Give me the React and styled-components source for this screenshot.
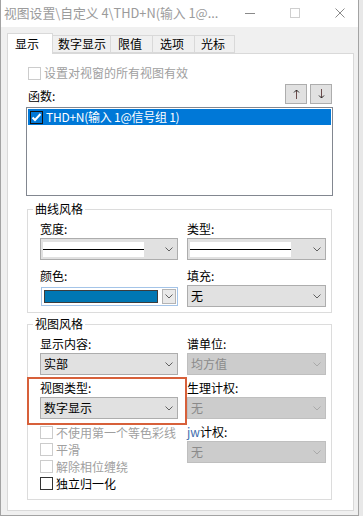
import React from 'react';
import styled, { createGlobalStyle, css } from 'styled-components';

const FONT = `"Noto Sans CJK SC", "Microsoft YaHei", sans-serif`;

const GlobalStyle = createGlobalStyle`
  html, body { margin: 0; padding: 0; }
  body { font-family: ${FONT}; font-size: 12px; background: #e6e6e6; color: #000; }
  * { box-sizing: border-box; }
`;

const Screen = styled.div`
  width: 363px;
  height: 516px;
  overflow: hidden;
  background: #e8e8e8;
`;

const Window = styled.div`
  width: 359px;
  height: 516px;
  background: #f0f0f0;
  border: 1px solid #a3a3a3;
  border-top: none;
  display: flex;
  flex-direction: column;
`;

const TitleBar = styled.div`
  height: 27px;
  flex: none;
  background: #fff;
  display: flex;
  align-items: center;
  padding: 0 13px 1px 3px;
`;

const TitleText = styled.div`
  flex: 1;
  color: #9b9b9b;
  font-size: 12.8px;
  line-height: 16px;
  white-space: nowrap;
`;

const WinButtons = styled.div`
  display: flex;
  align-items: center;
  gap: 35px;
`;

const Body = styled.div`
  flex: 1;
  display: flex;
  flex-direction: column;
  padding: 6px 4px 4px 6px;
  min-height: 0;
`;

const TabRow = styled.div`
  position: relative;
  z-index: 1;
  height: 20px;
  display: flex;
  align-items: flex-start;
`;

const Tab = styled.div`
  width: ${(p) => p.$w}px;
  height: ${(p) => (p.$active ? 21 : 18)}px;
  margin-top: ${(p) => (p.$active ? 0 : 2)}px;
  margin-left: ${(p) => (p.$first ? 0 : -1)}px;
  padding-left: ${(p) => p.$pl}px;
  border: 1px solid #d9d9d9;
  border-bottom: ${(p) => (p.$active ? 'none' : '1px solid #d9d9d9')};
  background: ${(p) => (p.$active ? '#fff' : '#f0f0f0')};
  line-height: 16px;
  display: flex;
  align-items: center;
  white-space: nowrap;
  position: relative;
  z-index: ${(p) => (p.$active ? 2 : 1)};
`;

const Panel = styled.div`
  flex: 1;
  background: #fff;
  border: 1px solid #d9d9d9;
  padding: 11px 20px 10px 18px;
  display: flex;
  flex-direction: column;
  min-height: 0;
`;

const CheckRow = styled.label`
  display: flex;
  align-items: center;
  gap: 3px;
  height: ${(p) => p.$h || 16}px;
  line-height: 16px;
  margin-left: ${(p) => p.$ml || 0}px;
  color: ${(p) => (p.$disabled ? '#a0a0a0' : '#000')};
  white-space: nowrap;
`;

const Box = styled.span`
  width: 13px;
  height: 13px;
  flex: none;
  border: 1px solid ${(p) => (p.$disabled ? '#cccccc' : '#333333')};
  background: #fff;
`;

const FuncHeader = styled.div`
  margin-top: 3px;
  height: 20px;
  display: flex;
  justify-content: space-between;
  align-items: flex-end;
  padding: 0 1px 0 2px;
`;

const FuncLabel = styled.span`
  line-height: 16px;
`;

const ArrowGroup = styled.div`
  display: flex;
  gap: 3px;
  align-self: stretch;
`;

const ArrowButton = styled.div`
  width: 22px;
  height: 20px;
  background: #e1e1e1;
  border: 1px solid #adadad;
  display: flex;
  align-items: center;
  justify-content: center;
`;

const ListBox = styled.div`
  margin-top: 3px;
  height: 89px;
  border: 1px solid #828790;
  padding: 1px;
  background: #fff;
`;

const ListItem = styled.div`
  height: 16px;
  background: #0078d7;
  color: #fff;
  display: flex;
  align-items: center;
  gap: 3px;
  padding-left: 2px;
  line-height: 16px;
  white-space: nowrap;
`;

const ItemText = styled.span`
  letter-spacing: -0.25px;
`;

const Group = styled.fieldset`
  margin: ${(p) => p.$mt}px 1px 0 1px;
  border: 1px solid #dcdcdc;
  padding: 4px 6px ${(p) => p.$pb}px 5px;
  min-width: 0;
`;

const Legend = styled.legend`
  padding: 0 2px;
  line-height: 16px;
  font-size: 12px;
`;

const FieldGrid = styled.div`
  margin-left: 7px;
  display: grid;
  grid-template-columns: 138px 139px;
  column-gap: 9px;
  row-gap: ${(p) => p.$rg}px;
  align-items: start;
`;

const Field = styled.div`
  display: flex;
  flex-direction: column;
  gap: 1px;
  position: relative;
  ${(p) =>
    p.$highlight &&
    css`
      &::after {
        content: '';
        position: absolute;
        left: -13px;
        right: -9px;
        top: -3px;
        bottom: -6px;
        border: 2px solid #d7603a;
        pointer-events: none;
      }
    `}
`;

const FieldLabel = styled.div`
  line-height: 16px;
  height: 16px;
  white-space: nowrap;
  color: ${(p) => (p.$disabled ? '#a0a0a0' : '#000')};
`;

const Blue = styled.span`
  color: #3f6fae;
`;

const Combo = styled.div`
  height: 22px;
  border: 1px solid ${(p) => (p.$disabled ? '#bfbfbf' : '#adadad')};
  background: ${(p) => (p.$disabled ? '#cccccc' : '#e1e1e1')};
  display: flex;
  align-items: center;
  justify-content: space-between;
  padding: ${(p) => (p.$sample ? '3px 4px 3px 2px' : '0 4px 0 3px')};
  color: ${(p) => (p.$disabled ? '#8a8a8a' : '#000')};
  line-height: 16px;
`;

const LineSample = styled.div`
  width: 101px;
  height: 15px;
  align-self: flex-start;
  background: #fff;
  display: flex;
  align-items: center;
  &::before {
    content: '';
    display: block;
    width: 100%;
    height: 1px;
    background: #000;
  }
`;

const ColorCombo = styled.div`
  height: 19px;
  margin-top: 2px;
  margin-left: 1px;
  border: 1px solid #a4c4e8;
  background: #fff;
  display: flex;
  align-items: stretch;
  gap: 4px;
  padding: 1px;
`;

const Swatch = styled.div`
  flex: 1;
  border: 1px solid #3c3c3c;
  background: #0077b3;
  margin: 1px 0 1px 1px;
`;

const DropBtn = styled.div`
  width: 14px;
  border: 1px solid #b4b4b4;
  background: #e9e9e9;
  display: flex;
  align-items: center;
  justify-content: center;
`;

const CheckList = styled.div`
  display: flex;
  flex-direction: column;
`;

const Chevron = ({ disabled }) => (
  <svg width="8" height="5" viewBox="0 0 8 5">
    <path d="M0.5 0.5 L4 4 L7.5 0.5" fill="none" stroke={disabled ? '#a9a9a9' : '#606060'} strokeWidth="1" />
  </svg>
);

const Check = ({ disabled, label, h }) => (
  <CheckRow $disabled={disabled} $h={h}>
    <Box $disabled={disabled} />
    {label}
  </CheckRow>
);

const tabs = [
  { t: '显示', w: 46, pl: 7, active: true },
  { t: '数字显示', w: 59, pl: 5 },
  { t: '限值', w: 43, pl: 7 },
  { t: '选项', w: 43, pl: 7 },
  { t: '光标', w: 41, pl: 6 },
];

export default function App() {
  return (
    <Screen>
      <GlobalStyle />
      <Window>
        <TitleBar>
          <TitleText>视图设置\自定义 4\THD+N(输入 1@...</TitleText>
          <WinButtons>
            <svg width="10" height="10" viewBox="0 0 10 10">
              <path d="M0 5.5 H10" stroke="#8a8a8a" strokeWidth="1" />
            </svg>
            <svg width="10" height="10" viewBox="0 0 10 10">
              <rect x="0.5" y="0.5" width="9" height="9" fill="none" stroke="#cfcfcf" strokeWidth="1" />
            </svg>
            <svg width="10" height="10" viewBox="0 0 10 10">
              <path d="M0.5 0.5 L9.5 9.5 M9.5 0.5 L0.5 9.5" stroke="#8a8a8a" strokeWidth="1" />
            </svg>
          </WinButtons>
        </TitleBar>
        <Body>
          <TabRow>
            {tabs.map((t, i) => (
              <Tab key={t.t} $w={t.w} $pl={t.pl} $active={t.active} $first={i === 0}>
                {t.t}
              </Tab>
            ))}
          </TabRow>
          <Panel>
            <CheckRow $disabled $ml={2}>
              <Box $disabled />
              设置对视窗的所有视图有效
            </CheckRow>
            <FuncHeader>
              <FuncLabel>函数:</FuncLabel>
              <ArrowGroup>
                <ArrowButton>
                  <svg width="7" height="10" viewBox="0 0 7 10">
                    <path d="M3.5 1 V10" stroke="#6b4a4a" strokeWidth="1" />
                    <path d="M1 3.5 L3.5 1 L6 3.5" fill="none" stroke="#222" strokeWidth="1" />
                  </svg>
                </ArrowButton>
                <ArrowButton>
                  <svg width="7" height="10" viewBox="0 0 7 10">
                    <path d="M3.5 0 V9" stroke="#6b4a4a" strokeWidth="1" />
                    <path d="M1 6.5 L3.5 9 L6 6.5" fill="none" stroke="#222" strokeWidth="1" />
                  </svg>
                </ArrowButton>
              </ArrowGroup>
            </FuncHeader>
            <ListBox>
              <ListItem>
                <svg width="13" height="13" viewBox="0 0 13 13">
                  <rect x="0.5" y="0.5" width="12" height="12" fill="none" stroke="#111" strokeWidth="1" />
                  <path d="M2.5 6.5 L5 9 L10.5 3" fill="none" stroke="#fff" strokeWidth="2" />
                </svg>
                <ItemText>THD+N(输入 1@信号组 1)</ItemText>
              </ListItem>
            </ListBox>

            <Group $mt={5} $pb={5}>
              <Legend>曲线风格</Legend>
              <FieldGrid $rg={8}>
                <Field>
                  <FieldLabel>宽度:</FieldLabel>
                  <Combo $sample>
                    <LineSample />
                    <Chevron />
                  </Combo>
                </Field>
                <Field>
                  <FieldLabel>类型:</FieldLabel>
                  <Combo $sample>
                    <LineSample />
                    <Chevron />
                  </Combo>
                </Field>
                <Field>
                  <FieldLabel>颜色:</FieldLabel>
                  <ColorCombo>
                    <Swatch />
                    <DropBtn>
                      <Chevron />
                    </DropBtn>
                  </ColorCombo>
                </Field>
                <Field>
                  <FieldLabel>填充:</FieldLabel>
                  <Combo>
                    <span>无</span>
                    <Chevron />
                  </Combo>
                </Field>
              </FieldGrid>
            </Group>

            <Group $mt={3} $pb={7}>
              <Legend>视图风格</Legend>
              <FieldGrid $rg={5}>
                <Field>
                  <FieldLabel>显示内容:</FieldLabel>
                  <Combo>
                    <span>实部</span>
                    <Chevron />
                  </Combo>
                </Field>
                <Field>
                  <FieldLabel>谱单位:</FieldLabel>
                  <Combo $disabled>
                    <span>均方值</span>
                    <Chevron disabled />
                  </Combo>
                </Field>
                <Field $highlight>
                  <FieldLabel>视图类型:</FieldLabel>
                  <Combo>
                    <span>数字显示</span>
                    <Chevron />
                  </Combo>
                </Field>
                <Field>
                  <FieldLabel>生理计权:</FieldLabel>
                  <Combo $disabled>
                    <span>无</span>
                    <Chevron disabled />
                  </Combo>
                </Field>
                <CheckList>
                  <Check disabled label="不使用第一个等色彩线" h={17} />
                  <Check disabled label="平滑" h={17} />
                  <Check disabled label="解除相位缠绕" h={17} />
                  <Check label="独立归一化" h={17} />
                </CheckList>
                <Field>
                  <FieldLabel>
                    <Blue>jw</Blue>计权:
                  </FieldLabel>
                  <Combo $disabled>
                    <span>无</span>
                    <Chevron disabled />
                  </Combo>
                </Field>
              </FieldGrid>
            </Group>
          </Panel>
        </Body>
      </Window>
    </Screen>
  );
}
